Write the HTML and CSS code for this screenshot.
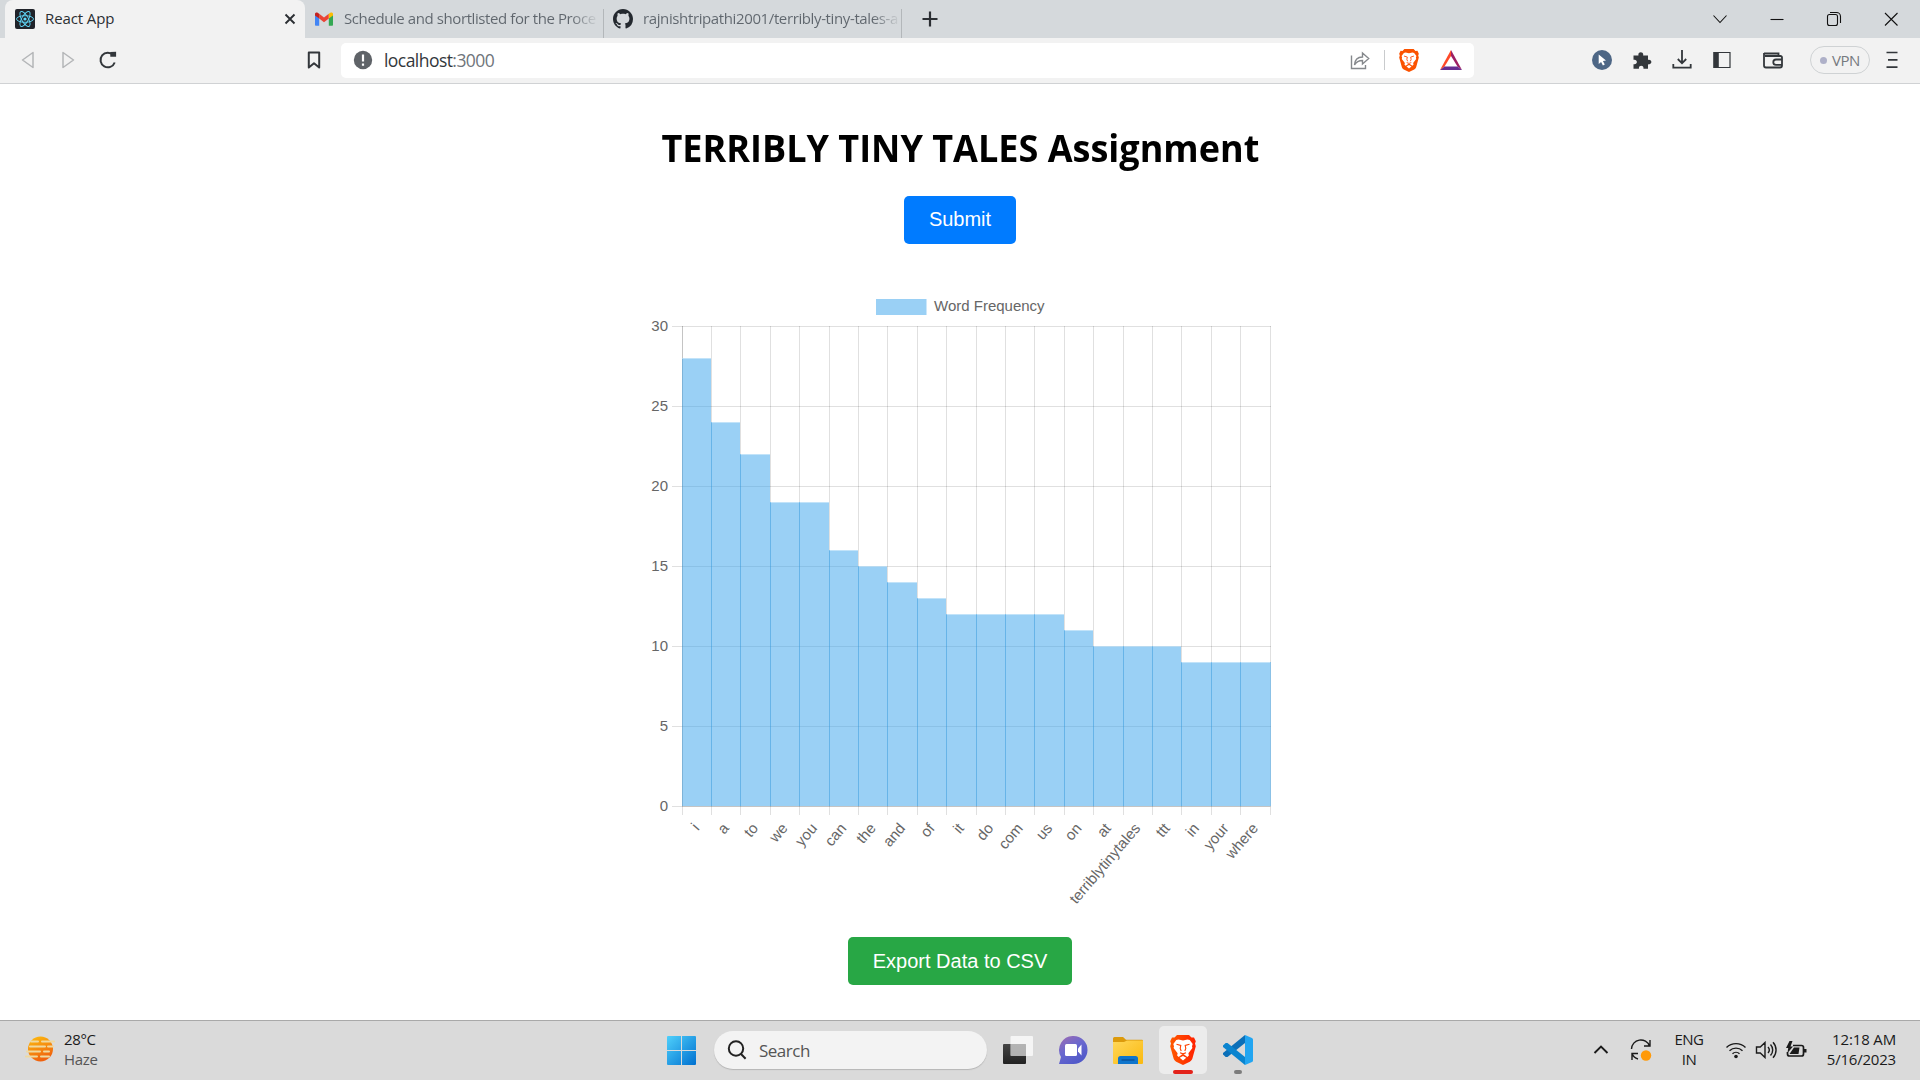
FILE: index.html
```html
<!DOCTYPE html>
<html lang="en">
<head>
<meta charset="utf-8">
<title>React App</title>
<link rel="stylesheet" href="styles.css">
</head>
<body>
<svg class="defs" width="0" height="0" aria-hidden="true">
  <defs>
    <linearGradient id="lionFill" x1="0" x2="1"><stop offset="0" stop-color="#ff5a00"/><stop offset="1" stop-color="#ff2000"/></linearGradient>
    <linearGradient id="winFill" x1="0" y1="0" x2="1" y2="1"><stop offset="0" stop-color="#4fd0fb"/><stop offset="1" stop-color="#0070d0"/></linearGradient>
    <linearGradient id="sunFill" x1="0" y1="0" x2="0.4" y2="1"><stop offset="0" stop-color="#fdc00f"/><stop offset="1" stop-color="#f0620e"/></linearGradient>
    <linearGradient id="chatFill" x1="0" y1="0" x2="0.6" y2="1"><stop offset="0" stop-color="#a06bb0"/><stop offset=".5" stop-color="#6a68cf"/><stop offset="1" stop-color="#5059c9"/></linearGradient>
    <linearGradient id="folderFill" x1="0" y1="0" x2="1" y2="1"><stop offset="0" stop-color="#ffd75a"/><stop offset="1" stop-color="#fab90f"/></linearGradient>
    <linearGradient id="darkFill" x1="0" y1="0" x2="0" y2="1"><stop offset="0" stop-color="#444"/><stop offset="1" stop-color="#222"/></linearGradient>
    <symbol id="lion" viewBox="0 0 26 30">
      <path d="M7 0h12l2.500 2.600 2.500-.2 1.800 3.800-.8 2.300.8 2.700-3.400 12.300c-.5 1.600-1.300 2.300-2.600 3.200L13 30l-6.800-3.300c-1.300-.9-2.100-1.600-2.600-3.200L.2 11.200 1 8.500.2 6.200 2 2.400l2.500.2z"/>
      <path fill="#fff" d="M8.500 4.600 13 5.400l4.500-.8 2.200.5 3 4-.7 2.100.4 1.700-4 5.400.5 2.300-1.600 1.400-3.200-2.500-1.100-.4-1.100.4L8.700 22l-1.600-1.400.5-2.300-4-5.400.4-1.700-.7-2.100 3-4zM9.700 22.800 13 21l3.300 1.800L13 25.500z"/>
      <path fill="none" stroke="#ff4000" stroke-width="1.100" d="M6.500 9.200l4.300 1.300-.6 3 1 2.500M19.500 9.200l-4.300 1.300.6 3-1 2.500M10 17.700l3 1.100 3-1.100"/>
    </symbol>
  </defs>
</svg>

<header class="tabstrip">
  <div class="tab tab-active">
    <svg class="favicon" viewBox="0 0 20 20"><rect width="20" height="20" rx="2" fill="#20232a"/><g fill="none" stroke="#61dafb" stroke-width=".9"><ellipse cx="10" cy="10" rx="8.500" ry="3.300"/><ellipse cx="10" cy="10" rx="8.500" ry="3.300" transform="rotate(60 10 10)"/><ellipse cx="10" cy="10" rx="8.500" ry="3.300" transform="rotate(120 10 10)"/></g><circle cx="10" cy="10" r="1.600" fill="#61dafb"/></svg>
    <span class="tab-title title-react">React App</span>
    <svg class="tab-close" viewBox="0 0 12 12"><path d="M1.500 1.500l9 9M10.500 1.500l-9 9" stroke="#2b2f33" stroke-width="1.900"/></svg>
  </div>
  <div class="tab tab-mail">
    <svg class="favicon" viewBox="0 0 20 20"><path fill="#4285f4" d="M1 5.500v10.300c0 .6.500 1 1 1h3.200V9z"/><path fill="#34a853" d="M19 5.500v10.300c0 .6-.5 1-1 1h-3.200V9z"/><path fill="#ea4335" d="M5.200 9.600V4.800L10 8.400l4.800-3.600v4.800L10 13.200z"/><path fill="#c5221f" d="M1 4.900v1.600l4.200 3.100V4.800l-1.200-.9C2.700 3 1 3.600 1 4.900z"/><path fill="#fbbc04" d="M19 4.900v1.600l-4.200 3.100V4.800l1.200-.9c1.300-.9 3-.3 3 1z"/></svg>
    <span class="tab-title title-mail">Schedule and shortlisted for the Proce</span>
  </div>
  <div class="tab tab-git">
    <svg class="favicon" viewBox="0 0 16 16"><path fill="#24292f" d="M8 0C3.580 0 0 3.580 0 8c0 3.540 2.290 6.530 5.470 7.590.4.070.55-.17.55-.38 0-.19-.01-.82-.01-1.490-2.010.37-2.530-.49-2.690-.94-.09-.23-.48-.94-.82-1.130-.28-.15-.68-.52-.01-.53.63-.01 1.080.58 1.230.82.72 1.210 1.870.87 2.330.66.07-.52.28-.87.51-1.070-1.780-.2-3.640-.89-3.640-3.950 0-.87.31-1.590.82-2.150-.08-.2-.36-1.020.08-2.120 0 0 .67-.21 2.200.82.64-.18 1.320-.27 2-.27s1.360.09 2 .27c1.530-1.040 2.200-.82 2.200-.82.44 1.100.16 1.920.08 2.120.51.56.82 1.270.82 2.150 0 3.070-1.870 3.750-3.650 3.950.29.25.54.73.54 1.480 0 1.070-.01 1.930-.01 2.200 0 .21.15.46.55.38A8.010 8.010 0 0 0 16 8c0-4.420-3.580-8-8-8z"/></svg>
    <span class="tab-title title-git">rajnishtripathi2001/terribly-tiny-tales-a</span>
  </div>
  <svg class="new-tab" viewBox="0 0 16 16"><path d="M8 .5v15M.5 8h15" stroke="#2b2f33" stroke-width="2.200"/></svg>
  <div class="window-controls">
    <svg viewBox="0 0 20 20"><path d="M3.500 6.500L10 13.500l6.500-7"/></svg>
    <svg viewBox="0 0 20 20"><path d="M3.500 10.500h13"/></svg>
    <svg viewBox="0 0 20 20"><rect x="3.500" y="5.500" width="10" height="11" rx="2"/><path d="M6 3.500h6.500a4 4 0 0 1 4 4V14"/></svg>
    <svg viewBox="0 0 20 20"><path d="M4 4l12.500 12.500M16.500 4L4 16.500"/></svg>
  </div>
</header>

<nav class="toolbar">
  <div class="nav-buttons">
    <svg viewBox="0 0 20 20"><path class="dim" d="M15 2.500v15L4.500 10z"/></svg>
    <svg viewBox="0 0 20 20"><path class="dim" d="M5 2.500v15L15.500 10z"/></svg>
    <svg viewBox="0 0 20 20"><path class="bold" d="M15.300 5.200A7.300 7.300 0 1 0 16.700 12.500"/><path fill="#33373b" d="M12.300 6.800V2l5.800-.3v5.100z"/></svg>
    <svg class="bookmark" viewBox="0 0 20 20"><path class="bold" d="M4.800 2.500h10.400v15L10 13.300l-5.200 4.200z" stroke-linejoin="round"/></svg>
  </div>
  <div class="address">
    <svg class="site-info" viewBox="0 0 20 20"><circle cx="10" cy="10" r="9.200" fill="#5f6368"/><path d="M10 4.500v7M10 13.500v2.200" stroke="#fff" stroke-width="2.200"/></svg>
    <span class="url">localhost<span class="port">:3000</span></span>
    <svg class="share" viewBox="0 0 20 20"><path fill="none" stroke="#85888c" stroke-width="1.400" d="M1.500 5.500v13h14V15M4.500 15c.3-5 3-8 8-8V3l6.200 5.500-6.200 5.500V10.500c-3.500 0-6 1-8 4.500z"/></svg>
    <i class="divider"></i>
    <svg class="shield"><use href="#lion" fill="#fb5200"/></svg>
    <svg class="rewards" viewBox="0 0 24 22"><path fill="#ff4a28" d="M12 1v6L5.500 17.500 1 21z"/><path fill="#9e1f63" d="M12 1l11 20-4.500-3.500L12 7z"/><path fill="#662d91" d="M1 21l4.500-3.500h13L23 21z"/></svg>
  </div>
  <div class="extensions">
    <svg viewBox="0 0 20 20"><circle cx="10" cy="10" r="10" fill="#4d6685"/><path fill="#fff" d="M6.700 4.500l7.300 6-3.100.5 1.900 3.600-1.900 1-1.800-3.700-2.400 2z"/></svg>
    <svg viewBox="0 0 20 20"><path fill="#33373b" d="M1.500 5.500h5c-1.100-4.400 5.700-4.400 4.600 0h4.900v4.400c4.500-1 4.500 5.300 0 4.400V18.800h-4.600c1-4.200-5.400-4.200-4.400 0H1.500v-4.600c4.500 1 4.500-5.400 0-4.400z"/></svg>
    <svg viewBox="0 0 20 20"><path class="line" d="M10 0v13M5.800 9l4.200 4.300L14.200 9M1.300 14v3.700h17.400V14"/></svg>
    <svg viewBox="0 0 20 20"><path class="thin" d="M2 2.500h16v15H2z"/><path fill="#33373b" d="M1.500 2h5.300v16H1.500z"/></svg>
    <svg class="wallet" viewBox="0 0 20 20"><path class="line" d="M1 3.500h14.500v2.500M1 3v12.500a2 2 0 0 0 2 2h14a2 2 0 0 0 2-2V7.500a1.500 1.500 0 0 0-1.500-1.500H2M19 9.500h-6a2.700 2.700 0 0 0 0 5.400h6"/></svg>
    <div class="vpn"><i></i><span>VPN</span></div>
    <svg class="menu" viewBox="0 0 20 20"><path d="M4.500 2.500h11M6 9.800h9.500M4.500 17.200h11" stroke="#33373b" stroke-width="1.700"/></svg>
  </div>
</nav>

<main class="page">
  <h1>TERRIBLY TINY TALES Assignment</h1>
  <button class="btn btn-submit">Submit</button>
  <svg class="chart" id="chart" width="640" height="637"></svg>
  <button class="btn btn-export">Export Data to CSV</button>
</main>

<footer class="taskbar">
  <div class="weather">
    <svg viewBox="0 0 30 26"><circle cx="15.500" cy="13" r="12.500" fill="url(#sunFill)"/><g stroke-width="2" stroke-linecap="round" stroke="#efd9a0"><path d="M6 5.500h7M17 5.500h12M5 10.500h15M23 10.500h5M2 15.500h13M19 15.500h5M1 20.500h11M16 20.500h8"/></g></svg>
    <div><span class="temp">28°C</span><span class="haze">Haze</span></div>
  </div>
  <div class="apps">
    <svg class="start" viewBox="0 0 29 29"><path fill="url(#winFill)" d="M1 0h13v14H0V1a1 1 0 0 1 1-1zM15 0h13a1 1 0 0 1 1 1v13H15zM0 15h14v14H1a1 1 0 0 1-1-1zM15 15h14v13a1 1 0 0 1-1 1H15z"/></svg>
    <div class="search">
      <svg viewBox="0 0 20 20"><g fill="none" stroke="#222" stroke-width="2"><circle cx="9" cy="8.500" r="7.200"/><path d="M13.800 13.800l4.800 5"/></g></svg>
      <span>Search</span>
    </div>
    <svg class="app view" viewBox="0 0 30 28"><rect x="0" y="8" width="23" height="20" rx="1" fill="url(#darkFill)"/><rect x="7.500" y="0" width="22.500" height="20" rx="1" fill="#fff" fill-opacity=".72"/><path fill="#999" fill-opacity=".45" d="M7.500 8H23v12H7.500z"/></svg>
    <svg class="app chat" viewBox="0 0 30 28"><path fill="url(#chatFill)" d="M15.500 0a14 14 0 0 1 0 28H1l2-7A14 14 0 0 1 15.500 0z"/><rect x="7" y="8" width="12" height="12" rx="1.500" fill="#fff"/><path fill="#fff" d="M20 12.500l3.500-4v11l-3.500-4z"/></svg>
    <svg class="app folder" viewBox="0 0 30 28"><path fill="#dc9a0c" d="M1.500 1H10l3 2.800h16a1 1 0 0 1 1 1V12H0V2.500A1.500 1.500 0 0 1 1.500 1z"/><path fill="url(#folderFill)" d="M0 6h11l3-1.500h16V27a1 1 0 0 1-1 1H1a1 1 0 0 1-1-1z"/><path fill="#0f75cc" d="M5 28v-5.500a2.500 2.500 0 0 1 2.500-2.500h15a2.500 2.500 0 0 1 2.500 2.500V28z"/><path stroke="#0b539c" stroke-width="1.500" d="M8.500 24h13"/></svg>
    <div class="app tile"><svg><use href="#lion" fill="url(#lionFill)"/></svg><i></i></div>
    <div class="app code"><svg viewBox="0 0 30 30"><path fill="#0b6fb8" d="M22 0v8L4.500 22 2.700 22 0 19.500V18z"/><path fill="#0a84cf" d="M0 10.500L2.700 8h1.800L22 22v8L0 12z"/><path fill="#22a5f1" d="M22 0l7 3a2 2 0 0 1 1 1.800v20.400a2 2 0 0 1-1 1.800l-7 3z"/></svg><i></i></div>
  </div>
  <div class="tray">
    <svg class="up" viewBox="0 0 20 20"><path d="M3.500 13L10 6.500l6.500 6.500" stroke-width="1.900"/></svg>
    <svg class="update" viewBox="0 0 22 22"><path d="M1.500 10A9.300 9.300 0 0 1 19.500 7M20 1v6h-6M8 20A9 9 0 0 1 2 14.500M2 21v-6.500h6"/><circle cx="16" cy="16.500" r="5.200" fill="#ff9a0a" stroke="none"/></svg>
    <div class="lang"><span>ENG</span><span>IN</span></div>
    <svg class="wifi" viewBox="0 0 22 18"><path d="M1.500 6.500a13.500 13.500 0 0 1 19 0M4.500 9.800a9.300 9.300 0 0 1 13 0M7.500 12.800a5 5 0 0 1 7 0"/><circle cx="11" cy="15.500" r="1.800" fill="#1a1a1a" stroke="none"/></svg>
    <svg class="volume" viewBox="0 0 22 18"><path d="M1.500 6h3.800L10 1.500v15L5.300 12H1.500zM13 6a4.500 4.500 0 0 1 0 6M15.500 3.500a8 8 0 0 1 0 11M18 1.200a11.500 11.500 0 0 1 0 15.600"/></svg>
    <svg class="battery" viewBox="0 0 22 18"><path d="M8 4.500h8.500a2 2 0 0 1 2 2v6.500a2 2 0 0 1-2 2H4.500a2 2 0 0 1-2-2v-2" stroke-width="1.700"/><path fill="#1a1a1a" stroke="none" d="M4.500 0L1 7h2.200L2.500 12 8 5.500H5.500L7.500 0zM9 6.500h5.500L13.500 13H4.500zM19 8h2.500v3.500H19z"/></svg>
    <div class="clock"><span>12:18 AM</span><span class="date">5/16/2023</span></div>
  </div>
</footer>
<script src="script.js"></script>
</body>
</html>
```
FILE: styles.css
```css
* { box-sizing: border-box; }

body {
  margin: 0;
  width: 1920px;
  height: 1080px;
  overflow: hidden;
  display: flex;
  flex-direction: column;
  background: #fff;
  font-family: "Open Sans", "Noto Sans", sans-serif;
  font-size: 15px;
  line-height: 20px;
}

svg { display: block; flex: none; }
.defs { position: absolute; }

/* Tab strip */
.tabstrip {
  display: flex;
  align-items: center;
  flex: none;
  height: 38px;
  padding-left: 5px;
  background: #d5d9dc;
}
.tab {
  display: flex;
  align-items: center;
  height: 38px;
  gap: 10px;
  padding-left: 10px;
}
.tab-active {
  width: 300px;
  border-radius: 8px 8px 0 0;
  background: #f2f2f2;
}
.favicon { width: 20px; height: 20px; }
.tab-title { padding-bottom: 2px; white-space: nowrap; color: #5f666d; }
.title-react { flex: 1; color: #2b2f33; letter-spacing: -.1px; }
.tab-close { width: 12px; height: 12px; margin-right: 9px; }
.tab-mail, .tab-git { position: relative; }
.tab-mail { width: 299px; padding-left: 9px; }
.tab-git { width: 298px; padding-left: 9px; }
.tab-mail::after, .tab-git::after {
  content: "";
  position: absolute;
  right: 0;
  top: 9px;
  width: 1px;
  height: 29px;
  background: #b3b7ba;
}
.title-mail, .title-git {
  color: transparent;
  background: linear-gradient(to right, #5f666d 90%, #c9cdd0);
  -webkit-background-clip: text;
  background-clip: text;
}
.title-mail { letter-spacing: -.41px; }
.title-git { letter-spacing: -.38px; }
.new-tab { width: 16px; height: 16px; margin-left: 20px; }
.window-controls {
  display: grid;
  grid-template-columns: repeat(4, 1fr);
  justify-items: center;
  width: 229px;
  margin-left: auto;
}
.window-controls svg { width: 20px; height: 20px; fill: none; stroke: #111; stroke-width: 1.1; }

/* Toolbar */
.toolbar {
  display: flex;
  align-items: center;
  flex: none;
  height: 46px;
  padding-bottom: 1px;
  border-bottom: 1px solid #d0d2d4;
  background: #f2f2f2;
}
.nav-buttons { display: flex; gap: 20px; width: 341px; padding: 0 17px 0 18px; }
.nav-buttons svg { width: 20px; height: 20px; fill: none; }
.nav-buttons .bookmark { margin-left: auto; }
.dim { stroke: #b4b6b8; stroke-width: 1.5; stroke-linejoin: round; }
.bold { stroke: #33373b; stroke-width: 2; }
.address {
  display: flex;
  align-items: center;
  width: 1133px;
  height: 35px;
  padding: 0 11px 0 12px;
  border-radius: 5px;
  background: #fff;
}
.site-info { width: 20px; height: 20px; }
.url { margin-left: 11px; flex: 1; font-size: 17.5px; letter-spacing: -.55px; color: #33373b; }
.port { color: #6f757b; }
.share { width: 20px; height: 20px; }
.divider { width: 1px; height: 20px; margin: 0 14px; background: #c9cbcd; }
.shield { width: 20px; height: 23px; }
.rewards { width: 24px; height: 22px; margin-left: 20px; }
.extensions { display: flex; align-items: center; gap: 20px; padding-left: 118px; }
.extensions svg { width: 20px; height: 20px; fill: none; }
.line { stroke: #33373b; stroke-width: 1.8; }
.thin { stroke: #33373b; stroke-width: 1.2; }
.extensions .wallet { margin-left: 11px; }
.vpn {
  display: flex;
  align-items: center;
  justify-content: center;
  gap: 5px;
  width: 60px;
  height: 28px;
  margin-left: 7px;
  border: 1px solid #cfd2d4;
  border-radius: 14px;
  color: #75797f;
}
.vpn i { width: 7px; height: 7px; border-radius: 50%; background: #aeb0c8; }
.vpn span { letter-spacing: -.5px; font-size: 15px; padding-bottom: 1px; }
.extensions .menu { margin-left: -8px; }

/* Page */
.page {
  display: flex;
  flex-direction: column;
  align-items: center;
  flex: none;
  height: 936px;
  padding-top: 36px;
}
h1 {
  margin: 0;
  height: 56px;
  white-space: nowrap;
  font-size: 38px;
  font-weight: 700;
  line-height: 54px;
  transform: scaleX(.948);
  color: #000;
}
.btn {
  flex: none;
  height: 48px;
  padding: 0 0 2px;
  border: 0;
  border-radius: 5px;
  color: #fff;
  font: 20px "Liberation Sans", Arial, sans-serif;
}
.btn-submit { width: 112px; margin-top: 20px; background: #007bff; }
.btn-export { width: 224px; margin-top: 16px; padding-bottom: 0; background: #28a745; }
.chart { margin-top: 40px; font: 15px "Liberation Sans", Arial, sans-serif; fill: #666; }
.grid { fill: rgba(0, 0, 0, .12); }
.bar { fill: #36a2eb; fill-opacity: .5; }
.edge { fill: #36a2eb; fill-opacity: .42; }
.cap { fill: #fff; fill-opacity: .4; }

/* Taskbar */
.taskbar {
  display: flex;
  align-items: center;
  flex: none;
  height: 60px;
  padding-bottom: 1px;
  border-top: 1px solid #a9a9a9;
  background: #dadada;
  color: #1a1a1a;
}
.taskbar span { display: block; white-space: nowrap; }
.weather { display: flex; align-items: center; gap: 9px; width: 667px; padding-left: 25px; }
.weather svg { width: 30px; height: 26px; margin-top: -2px; }
.weather div, .lang, .clock { padding-bottom: 2px; }
.temp { letter-spacing: -.35px; }
.haze { color: #555; letter-spacing: -.3px; }
.apps { display: flex; align-items: center; }
.start { width: 29px; height: 29px; }
.search {
  display: flex;
  align-items: center;
  gap: 12px;
  width: 273px;
  height: 38px;
  margin-left: 18px;
  padding-left: 13px;
  border-radius: 19px;
  background: #f3f3f3;
  box-shadow: 0 1px 1px #b5b5b5;
  font-size: 17px;
  color: #555;
}
.search svg { width: 20px; height: 20px; }
.search span { letter-spacing: -.5px; padding-top: 2px; }
.app { width: 30px; height: 28px; }
.view { margin-left: 16px; }
.chat, .folder { margin-left: 25px; }
.tile, .code { position: relative; }
.tile {
  display: flex;
  align-items: center;
  justify-content: center;
  width: 48px;
  height: 48px;
  margin-left: 16px;
  border-radius: 5px;
  background: #ececec;
}
.tile svg { width: 26px; height: 30px; }
.code { width: 30px; height: 30px; margin-left: 16px; }
.code svg { width: 30px; height: 30px; }
.tile i, .code i {
  position: absolute;
  left: 14px;
  bottom: 0;
  width: 20px;
  height: 4px;
  border-radius: 2px;
  background: #e3231b;
}
.code i { left: 11px; bottom: -9px; width: 8px; background: #7c7c7c; }
.tray { display: flex; align-items: center; margin-left: auto; padding-right: 24px; }
.tray svg { fill: none; stroke: #1a1a1a; stroke-width: 1.4; }
.up { width: 20px; height: 20px; }
.update { width: 22px; height: 22px; margin-left: 19px; }
.lang { width: 32px; margin-left: 21px; text-align: center; letter-spacing: -.5px; }
.wifi, .volume, .battery { width: 22px; height: 18px; }
.wifi { margin-left: 20px; }
.volume, .battery { margin-left: 8px; }
.clock { width: 89px; text-align: right; letter-spacing: -.15px; }
.date { letter-spacing: -.2px; }
```
FILE: script.js
```js
const words = [
  ["i", 28], ["a", 24], ["to", 22], ["we", 19], ["you", 19], ["can", 16],
  ["the", 15], ["and", 14], ["of", 13], ["it", 12], ["do", 12], ["com", 12],
  ["us", 12], ["on", 11], ["at", 10], ["terriblytinytales", 10], ["ttt", 10],
  ["in", 9], ["your", 9], ["where", 9]
];
const x0 = 42, yTop = 42, yBase = 522, unit = 16, step = 29.4;
const column = i => Math.floor(x0 + i * step + 0.01);
const rect = (cls, x, y, w, h) =>
  `<rect class="${cls}" x="${x}" y="${y}" width="${w}" height="${h}"/>`;
let out = "";

for (let v = 0; v <= 30; v += 5) {
  const y = yBase - v * unit;
  out += rect("grid", 32, y, 599, 1);
  out += `<text x="28" y="${y + 5}" text-anchor="end">${v}</text>`;
}
for (let i = 0; i <= words.length; i++) {
  out += rect("grid", column(i), yTop, 1, 489);
}
out += rect("grid", x0, yTop, 1, 480) + rect("grid", x0, yBase, 588, 1);

words.forEach(([word, count], i) => {
  const x = column(i), y = yBase - count * unit;
  const w = column(i + 1) - x;
  out += rect("bar", x, y, w + (i === words.length - 1 ? 1 : 0), yBase - y);
  out += rect("cap", x, y, w, 1);
  if (i) out += rect("edge", x, y, 1, yBase - y);
  const cx = x0 + (i + 0.5) * step;
  out += `<text text-anchor="end" transform="translate(${cx - 0.3} 541.500) rotate(-49.500)" dy="5">${word}</text>`;
});

out += rect("bar", 236, 15, 50.5, 16);
out += `<text x="294" y="27">Word Frequency</text>`;
document.getElementById("chart").innerHTML = out;
```
